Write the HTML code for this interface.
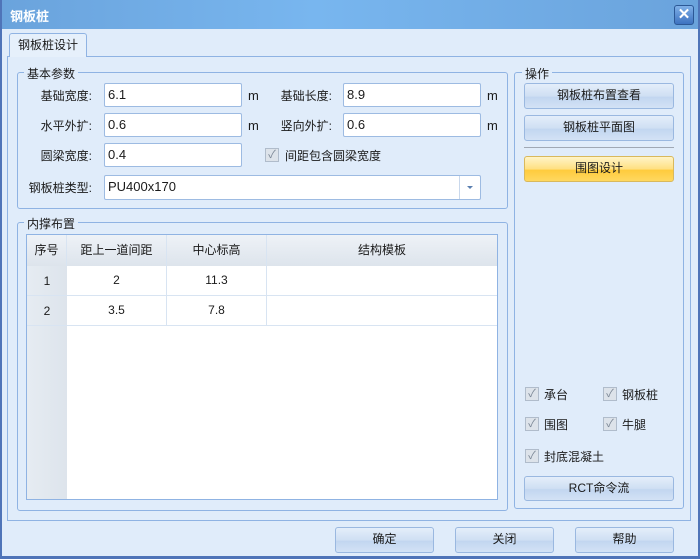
<!DOCTYPE html>
<html><head><meta charset="utf-8"><style>
*{box-sizing:border-box;margin:0;padding:0}
body{width:700px;height:559px;overflow:hidden;font-family:"Liberation Sans","Noto Sans CJK SC",sans-serif;font-size:12px;color:#1a1a1a}
.win{position:absolute;left:0;top:0;width:700px;height:559px;background:#e0ecfa}
.title{position:absolute;left:0;top:0;width:700px;height:29px;background:linear-gradient(90deg,#6aa3dc,#78b6ef 45%,#6aa3dc);}
.title span{position:absolute;left:10px;top:6px;color:#fff;font-weight:bold;font-size:13px}
.close{position:absolute;left:674px;top:5px;width:20px;height:20px;border:1px solid #2c5896;border-radius:3px;background:linear-gradient(#7fb0e8,#3d72c0);color:#fff;font-weight:bold;font-size:15px;text-align:center;line-height:18px}
.a{position:absolute}
.tab{left:9px;top:33px;width:78px;height:24px;border:1px solid #8fb3e3;border-bottom:none;border-radius:3px 3px 0 0;background:#e6f0fb;text-align:center;line-height:22px;z-index:2}
.panel{left:7px;top:56px;width:684px;height:465px;border:1px solid #8fb3e3}
.grp{border:1px solid #8fb3e3;border-radius:3px}
.gl{background:#e0ecfa;padding:0 3px;font-size:12px}
.lbl{text-align:right;width:90px;font-size:12px}
.inp{background:#fff;border:1px solid #9dbbe2;border-radius:2px;height:24px;padding:3px 0 0 3px;font-size:13px}
.btn{border:1px solid #9ab8e0;border-radius:3px;background:linear-gradient(#e4eefa,#cfdff3 50%,#c2d6f0 55%,#d3e2f5);text-align:center;line-height:23px;font-size:12px}
.yb{border-color:#d9b95c;background:linear-gradient(#fff4c8,#ffe081 50%,#ffcb3d 55%,#ffd860)}
.cb{width:14px;height:14px;border:1px solid #b0bccb;background:#dde3ea;color:#7b8796;font-size:11px;line-height:12px;text-align:center}
.hd{background:linear-gradient(#eef2f7,#dde4ec);text-align:center;line-height:31px;border-right:1px solid #d8e4f2}
.c{text-align:center;line-height:30px;font-size:12px}
</style></head><body>
<div class="win">
<div class="title"><span>钢板桩</span><div class="close">✕</div></div>
<div class="a" style="left:0;top:0;width:2px;height:559px;background:#4f74b8"></div>
<div class="a" style="left:698px;top:0;width:2px;height:559px;background:#4f74b8"></div>
<div class="a" style="left:0;top:556px;width:700px;height:3px;background:#4f74b8"></div>
<div class="a tab">钢板桩设计</div>
<div class="a panel"></div>

<div class="a grp" style="left:17px;top:72px;width:491px;height:137px"></div>
<div class="a gl" style="left:24px;top:65px">基本参数</div>
<div class="a lbl" style="left:2px;top:87px">基础宽度:</div>
<div class="a inp" style="left:104px;top:83px;width:138px">6.1</div>
<div class="a" style="left:248px;top:88px;font-size:13px">m</div>
<div class="a lbl" style="left:242px;top:87px">基础长度:</div>
<div class="a inp" style="left:343px;top:83px;width:138px">8.9</div>
<div class="a" style="left:487px;top:88px;font-size:13px">m</div>
<div class="a lbl" style="left:2px;top:117px">水平外扩:</div>
<div class="a inp" style="left:104px;top:113px;width:138px">0.6</div>
<div class="a" style="left:248px;top:118px;font-size:13px">m</div>
<div class="a lbl" style="left:242px;top:117px">竖向外扩:</div>
<div class="a inp" style="left:343px;top:113px;width:138px">0.6</div>
<div class="a" style="left:487px;top:118px;font-size:13px">m</div>
<div class="a lbl" style="left:2px;top:147px">圆梁宽度:</div>
<div class="a inp" style="left:104px;top:143px;width:138px">0.4</div>
<div class="a cb" style="left:265px;top:148px">✓</div>
<div class="a" style="left:285px;top:147px">间距包含圆梁宽度</div>
<div class="a lbl" style="left:2px;top:179px">钢板桩类型:</div>
<div class="a inp" style="left:104px;top:175px;width:377px;height:25px">PU400x170</div>
<div class="a" style="left:459px;top:176px;width:1px;height:23px;background:#c9d8ec"></div>
<div class="a" style="left:467px;top:186px;width:0;height:0;border-left:3px solid transparent;border-right:3px solid transparent;border-top:3px solid #5a7fb0"></div>

<div class="a grp" style="left:17px;top:222px;width:491px;height:289px"></div>
<div class="a gl" style="left:24px;top:215px">内撑布置</div>
<div class="a" style="left:26px;top:234px;width:472px;height:266px;border:1px solid #8fb3e3;background:#fff">
 <div class="a" style="left:0;top:0;width:40px;height:264px;background:linear-gradient(90deg,#e6ecf2,#dde4ec)"></div>
 <div class="a hd" style="left:0;top:0;width:40px;height:31px">序号</div>
 <div class="a hd" style="left:40px;top:0;width:100px;height:31px">距上一道间距</div>
 <div class="a hd" style="left:140px;top:0;width:100px;height:31px">中心标高</div>
 <div class="a hd" style="left:240px;top:0;width:230px;height:31px;border-right:none">结构模板</div>
 <div class="a c" style="left:0;top:31px;width:40px;height:30px;border-bottom:1px solid #d8e4f2">1</div>
 <div class="a c" style="left:40px;top:31px;width:100px;height:30px;border-right:1px solid #d8e4f2;border-bottom:1px solid #d8e4f2;line-height:28px">2</div>
 <div class="a c" style="left:140px;top:31px;width:100px;height:30px;border-right:1px solid #d8e4f2;border-bottom:1px solid #d8e4f2;line-height:28px">11.3</div>
 <div class="a" style="left:240px;top:31px;width:230px;height:30px;border-bottom:1px solid #d8e4f2"></div>
 <div class="a c" style="left:0;top:61px;width:40px;height:30px;border-bottom:1px solid #d8e4f2">2</div>
 <div class="a c" style="left:40px;top:61px;width:100px;height:30px;border-right:1px solid #d8e4f2;border-bottom:1px solid #d8e4f2;line-height:28px">3.5</div>
 <div class="a c" style="left:140px;top:61px;width:100px;height:30px;border-right:1px solid #d8e4f2;border-bottom:1px solid #d8e4f2;line-height:28px">7.8</div>
 <div class="a" style="left:240px;top:61px;width:230px;height:30px;border-bottom:1px solid #d8e4f2"></div>
</div>

<div class="a grp" style="left:514px;top:72px;width:170px;height:437px"></div>
<div class="a gl" style="left:522px;top:65px">操作</div>
<div class="a btn" style="left:524px;top:83px;width:150px;height:26px">钢板桩布置查看</div>
<div class="a btn" style="left:524px;top:115px;width:150px;height:26px">钢板桩平面图</div>
<div class="a" style="left:524px;top:147px;width:150px;height:1px;background:#a0a8b4"></div>
<div class="a btn yb" style="left:524px;top:156px;width:150px;height:26px">围图设计</div>
<div class="a cb" style="left:525px;top:387px">✓</div><div class="a" style="left:544px;top:386px">承台</div>
<div class="a cb" style="left:603px;top:387px">✓</div><div class="a" style="left:622px;top:386px">钢板桩</div>
<div class="a cb" style="left:525px;top:417px">✓</div><div class="a" style="left:544px;top:416px">围图</div>
<div class="a cb" style="left:603px;top:417px">✓</div><div class="a" style="left:622px;top:416px">牛腿</div>
<div class="a cb" style="left:525px;top:449px">✓</div><div class="a" style="left:544px;top:448px">封底混凝土</div>
<div class="a btn" style="left:524px;top:476px;width:150px;height:25px">RCT命令流</div>

<div class="a btn" style="left:335px;top:527px;width:99px;height:26px">确定</div>
<div class="a btn" style="left:455px;top:527px;width:99px;height:26px">关闭</div>
<div class="a btn" style="left:575px;top:527px;width:99px;height:26px">帮助</div>
</div>
</body></html>
